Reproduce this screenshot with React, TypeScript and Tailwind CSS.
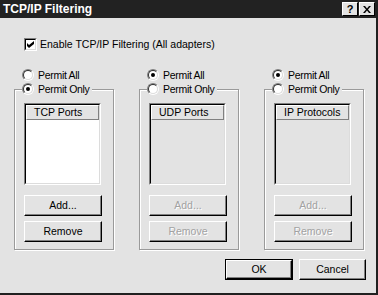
const FACE = 'bg-[#e3e3e3]';

function Radio({ checked, label }: { checked: boolean; label: string }) {
  return (
    <div className="flex h-[12px] items-center gap-[4px]">
      <span className="flex h-[12px] w-[12px] items-center justify-center rounded-full border border-t-[#808080] border-l-[#808080] border-b-white border-r-white">
        <span className="flex h-[10px] w-[10px] items-center justify-center rounded-full border border-t-[#303030] border-l-[#303030] border-b-[#dcdcdc] border-r-[#dcdcdc] bg-white">
          {checked && <span className="h-[4px] w-[4px] rounded-full bg-black" />}
        </span>
      </span>
      <span className="leading-none tracking-[-0.3px] text-black">{label}</span>
    </div>
  );
}

function Btn({
  label,
  disabled,
  isDefault,
  w,
}: {
  label: string;
  disabled?: boolean;
  isDefault?: boolean;
  w: string;
}) {
  return (
    <div className={`${w} h-[21px] ${isDefault ? 'border border-black' : ''}`}>
      <div className="flex h-full w-full items-center justify-center border border-t-white border-l-white border-r-black border-b-black shadow-[inset_-1px_-1px_0_#808080]">
        <span
          className={
            disabled
              ? 'text-[#a2a2a2] [text-shadow:1px_1px_0_#fff]'
              : 'text-black'
          }
        >
          {label}
        </span>
      </div>
    </div>
  );
}

function FilterGroup({
  permitAll,
  header,
  enabled,
}: {
  permitAll: boolean;
  header: string;
  enabled: boolean;
}) {
  return (
    <div className="flex w-[100px] flex-col">
      <div className="pl-[8px]">
        <Radio checked={permitAll} label="Permit All" />
      </div>
      <div className="relative mt-[8px] border border-[#9a9a9a] pl-[9px] pt-[13px] pb-[7px] shadow-[inset_1px_1px_0_#fff,1px_1px_0_#fff]">
        <div className={`absolute -top-[7px] left-[7px] pr-[2px] ${FACE}`}>
          <Radio checked={!permitAll} label="Permit Only" />
        </div>
        <div
          className={`h-[82px] w-[77px] border border-t-[#808080] border-l-[#808080] border-b-white border-r-white ${
            enabled ? 'bg-white' : FACE
          }`}
        >
          <div className="h-full w-full border border-t-black border-l-black border-b-[#dcdcdc] border-r-[#dcdcdc]">
            <div
              className={`flex h-[15px] w-full items-center border border-t-white border-l-white border-r-[#808080] border-b-[#808080] pl-[7px] ${FACE}`}
            >
              <span className="leading-none">{header}</span>
            </div>
          </div>
        </div>
        <div className="mt-[10px] flex flex-col gap-[5px]">
          <Btn label="Add..." disabled={!enabled} w="w-[78px]" />
          <Btn label="Remove" disabled={!enabled} w="w-[78px]" />
        </div>
      </div>
    </div>
  );
}

export default function App() {
  return (
    <div
      className={`flex h-[295px] w-[378px] flex-col border-r-2 border-b-2 border-r-[#202020] border-b-[#202020] ${FACE} text-[10.5px] text-black`}
      style={{ fontFamily: '"Liberation Sans", Arial, sans-serif' }}
    >
      {/* title bar */}
      <div className="flex h-[18px] items-center justify-between bg-[#222222] pl-[3px] pr-[1px]">
        <span className="text-[12px] font-bold leading-none text-white">TCP/IP Filtering</span>
        <div className="flex gap-[1px]">
          <div className={`flex h-[14px] w-[16px] items-center justify-center border border-t-white border-l-white border-r-black border-b-black ${FACE}`}>
            <span className="text-[11px] font-bold leading-none">?</span>
          </div>
          <div className={`flex h-[14px] w-[16px] items-center justify-center border border-t-white border-l-white border-r-black border-b-black ${FACE}`}>
            <svg width="8" height="7" viewBox="0 0 8 7">
              <path d="M0 0h2l2 2.5L6 0h2L5 3.5 8 7H6L4 4.5 2 7H0l3-3.5z" fill="#000" />
            </svg>
          </div>
        </div>
      </div>

      {/* enable checkbox */}
      <div className="mt-[20px] flex h-[13px] items-center gap-[3px] pl-[24px]">
        <span className="flex h-[13px] w-[13px] items-center justify-center border border-t-[#808080] border-l-[#808080] border-b-white border-r-white">
          <span className="flex h-[11px] w-[11px] items-center justify-center border border-t-black border-l-black border-b-[#dcdcdc] border-r-[#dcdcdc] bg-white">
            <svg width="7" height="7" viewBox="0 0 7 7">
              <path d="M0 2l2 2 5-4v3L2 7 0 5z" fill="#000" />
            </svg>
          </span>
        </span>
        <span className="leading-none">Enable TCP/IP Filtering (All adapters)</span>
      </div>

      {/* groups */}
      <div className="mt-[18px] flex gap-[25px] pl-[14px]">
        <FilterGroup permitAll={false} header="TCP Ports" enabled />
        <FilterGroup permitAll header="UDP Ports" enabled={false} />
        <FilterGroup permitAll header="IP Protocols" enabled={false} />
      </div>

      {/* dialog buttons */}
      <div className="mt-[9px] flex justify-end gap-[6px] pr-[10px]">
        <Btn label="OK" isDefault w="w-[68px]" />
        <Btn label="Cancel" w="w-[67px]" />
      </div>
    </div>
  );
}
